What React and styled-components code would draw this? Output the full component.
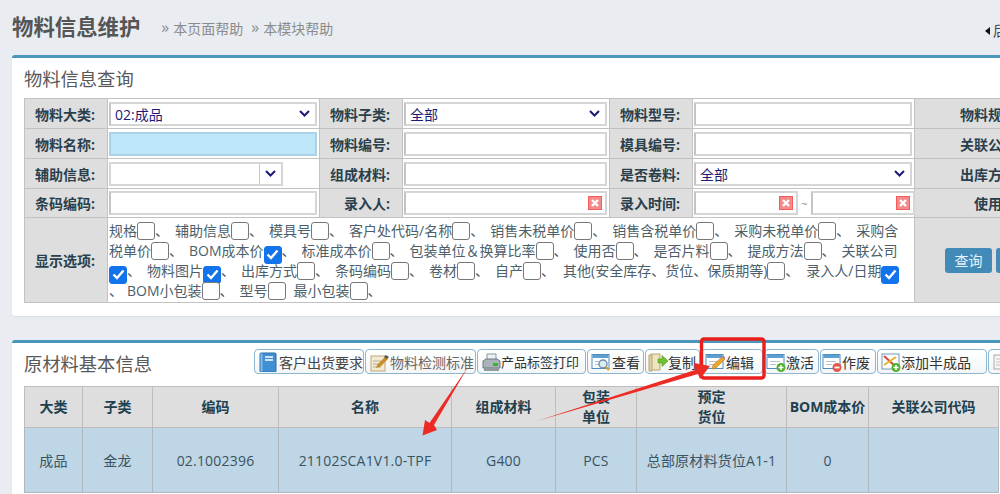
import React from 'react';
import styled, { createGlobalStyle } from 'styled-components';

const Global = createGlobalStyle`
  html, body { margin: 0; padding: 0; background: #e9edf2; overflow: hidden; }
  body { font-family: "Open Sans", "Noto Sans CJK SC", "Liberation Sans", sans-serif; font-size: 14px; }
`;
const Stage = styled.div`position: relative; width: 1000px; height: 494px; overflow: hidden; background: #e9edf2;`;
const PageHead = styled.header`height: 55px; width: 1040px; padding-left: 12px; display: flex; align-items: center; box-sizing: border-box;`;
const PageTitle = styled.h1`margin: 0 21px 0 0; font-size: 21.4px; line-height: 30px; font-weight: 700; color: #555; position: relative; top: -1px; white-space: nowrap;`;
const HelpLink = styled.a`margin-right: 8px; color: #8b8b8b; font-size: 14px; display: inline-flex; align-items: center; white-space: nowrap;`;
const Chev = styled.span`width: 12px; font-size: 16px; line-height: 18px; position: relative; top: -1px;`;
const Back = styled.span`position: absolute; left: 985px; top: 22px; font-size: 14px; line-height: 18px; color: #444; white-space: nowrap; display: flex; align-items: center; gap: 3px;`;
const Tri = styled.i`display: inline-block; width: 0; height: 0; border: 4px solid transparent; border-right: 5px solid #111; border-left: 0;`;
const Panel = styled.section`margin: ${p => p.$top}px 0 0 12px; width: 1240px; background: #fff; border-top: 3px solid #4a95ba; border-radius: 3px; box-shadow: 0 1px 2px #d8dce2; box-sizing: border-box; padding: 0 12px ${p => p.$bottom}px;`;
const PanelTitle = styled.h2`margin: 0; font-size: 18.3px; font-weight: 400; color: #585858; line-height: 26px; white-space: nowrap;`;
const QueryHead = styled.div`height: 40px; display: flex; align-items: center; padding-top: 2px; box-sizing: border-box;`;
const Table = styled.table`border-collapse: collapse; table-layout: fixed; width: ${p => p.$w}px; border: 1px solid #bbb;`;
const Row = styled.tr`height: ${p => p.$h}px;`;
const Label = styled.td`background: #dedede; border: 1px solid #c2c2c2; padding: 0 12px 0 0; text-align: right; font-weight: 700; color: #2a3f4c; font-size: 14px; white-space: nowrap;`;
const Value = styled.td`border: 1px solid #c2c2c2; padding: 0 2px 0 1px; background: #fff;`;
const Field = styled.div`height: 24px; box-sizing: border-box; border: 2px solid ${p => p.$blue ? '#a9d4e8' : '#d6d6d6'}; border-left-color: ${p => p.$blue ? '#a9d4e8' : '#c4c4c4'}; background: ${p => p.$blue ? '#bde6f9' : '#fff'}; width: ${p => p.$w ? p.$w + 'px' : '100%'}; display: flex; align-items: center; padding-left: 4px; color: #1d1a75; font-size: 14px; justify-content: ${p => p.$end ? 'flex-end' : 'space-between'}; flex: none;`;
const Combo = styled.div`width: 174px; height: 24px; box-sizing: border-box; border: 2px solid #d6d6d6; display: flex; justify-content: flex-end; background: #fff;`;
const ComboBtn = styled.div`width: 21px; border-left: 1px solid #c9c9c9; display: flex; align-items: center; justify-content: center;`;
const DateRange = styled.div`display: flex; align-items: center;`;
const Tilde = styled.span`width: 13px; flex: none; text-align: center; font-size: 11px; color: #888;`;
const ClearBox = styled.svg`width: 14px; height: 14px; margin-right: 3px; flex: none;`;
const ChevWrap = styled.span`display: flex; padding-right: 5px;`;
const Options = styled.td`border: 1px solid #c2c2c2; padding: 3px 0 0 1px; font-size: 14px; color: #4d5f6b; vertical-align: top; overflow: hidden;`;
const OptLine = styled.div`height: 20px; line-height: 20px; white-space: nowrap;`;
const Box = styled.span`display: inline-flex; width: 18px; height: 18px; box-sizing: border-box; border: 1px solid #777; border-radius: 3px; vertical-align: -4px; align-items: center; justify-content: center; background: ${p => p.$on ? '#1273eb' : '#fff'}; border-color: ${p => p.$on ? '#1273eb' : '#777'};`;
const Sep = styled.span`margin-right: ${p => p.$gap ?? 6}px;`;
const ActionCell = styled.td`background: #dedede; border: 1px solid #c2c2c2; padding: 0 0 0 30px;`;
const ActionRow = styled.div`display: flex; gap: 4px;`;
const QueryBtn = styled.div`width: 47px; height: 25px; border-radius: 3px; background: #428bb9; color: #e8f2f8; font-size: 14px; display: flex; align-items: center; justify-content: center; flex: none;`;
const InfoHead = styled.div`height: 43px; display: flex; align-items: flex-start;`;
const InfoTitle = styled(PanelTitle)`width: 230px; flex: none; margin-top: 8px;`;
const Toolbar = styled.div`display: flex; gap: 1px; margin-top: 6px;`;
const ToolBtn = styled.div`width: ${p => p.$w}px; height: 25px; flex: none; box-sizing: border-box; border: 1px solid #8db6cf; border-radius: 4px; background: linear-gradient(#fff, #f3f5f7); display: flex; align-items: center; padding-left: ${p => p.$pad ?? 3}px; gap: ${p => p.$gap ?? 1}px; font-size: ${p => p.$fs ?? 14}px; color: ${p => p.$c || '#444'}; white-space: nowrap;`;
const Th = styled.th`background: #dedede; border: 1px solid #bdbdbd; font-size: 14px; line-height: 20px; font-weight: 700; color: #20404f; padding: 0;`;
const Td = styled.td`background: #bed6e5; border: 1px solid #adb8bf; text-align: center; font-size: 14px; letter-spacing: .2px; color: #3c5362; padding: 0; white-space: nowrap;`;
const Annotation = styled.svg`position: absolute; left: 0; top: 0; pointer-events: none;`;
const IconSvg = styled.svg`flex: none;`;

const Chevron = () => (
  <svg width="11" height="7" viewBox="0 0 11 7"><path d="M1 1l4.5 4.5L10 1" fill="none" stroke="#1d1a75" strokeWidth="2" /></svg>
);
const Select = ({ children }) => (
  <Field>{children}<ChevWrap><Chevron /></ChevWrap></Field>
);
const Clear = () => (
  <ClearBox viewBox="0 0 14 14">
    <rect width="14" height="14" fill="#f25c5c" />
    <rect x="1" y="1" width="12" height="12" fill="#f58a8a" />
    <path d="M4 4l6 6M10 4l-6 6" stroke="#fff" strokeWidth="2.4" />
  </ClearBox>
);
const ClearField = ({ w }) => (
  <Field $w={w} $end><Clear /></Field>
);
const Check = ({ on }) => (
  <Box $on={on}>{on && <svg width="13" height="11" viewBox="0 0 13 11"><path d="M1.5 5.5l3.5 3.5 6.5-7.5" fill="none" stroke="#fff" strokeWidth="2.4" /></svg>}</Box>
);
const Opt = ({ t, on, gap, noSep }) => (
  <>{t}<Check on={on} />{!noSep && <Sep $gap={gap}>、</Sep>}</>
);

const Win = ({ children }) => (
  <>
    <rect x="1" y="2.5" width="17" height="14" fill="#fff" stroke="#4f8fc0" />
    <rect x="1.5" y="3" width="16" height="3" fill="#5d9fd0" />
    <path d="M4 9.5h10M4 12.5h6" stroke="#b8c4cc" />
    {children}
  </>
);
const Ico = ({ children }) => <IconSvg width="20" height="20" viewBox="0 0 20 20">{children}</IconSvg>;
const icons = {
  book: <Ico><rect x="2" y="1" width="16" height="19" rx="1" fill="#3f8fd2" stroke="#2a6ea8" /><rect x="2.5" y="1.5" width="2" height="18" fill="#7fbce8" /><path d="M7 5h8M7 8h8" stroke="#fff" strokeWidth="1.5" /></Ico>,
  note: <Ico><rect x="2" y="4" width="14" height="15" fill="#f3ead2" stroke="#bda877" /><path d="M4 9h8M4 12h6M4 15h8" stroke="#b8b09a" /><path d="M8 13l8-8 3 2-8 8-4 1z" fill="#c88d28" /><path d="M15 5l2-2 3 2-2 2z" fill="#555" /></Ico>,
  print: <Ico><path d="M6 2h9v6H6z" fill="#eef1f3" stroke="#8a959c" /><path d="M2 9l3-2h11l3 2v7H2z" fill="#a9b3ba" stroke="#6d7880" /><path d="M3 16h15v3H3z" fill="#8f9aa1" /><rect x="12" y="11" width="5" height="3" fill="#35b534" /></Ico>,
  view: <Ico><Win /><circle cx="12" cy="12" r="4" fill="#dceaf4" stroke="#6d8fa8" strokeWidth="1.4" /><path d="M15 15l3 3" stroke="#d89a2a" strokeWidth="2.2" /></Ico>,
  copy: <Ico><path d="M3 2h9v16H3z" fill="#efe4c0" stroke="#b5a573" /><path d="M1 3h3v16H1z" fill="#dccfa2" stroke="#b5a573" /><path d="M10 7h4V3.5L20 9l-6 5.5V11h-4z" fill="#6fc22f" stroke="#4b9a1b" strokeWidth=".6" /></Ico>,
  edit: <Ico><Win /><path d="M7 17l1-4 9-8 3 2-9 9z" fill="#eda62d" stroke="#b97a18" strokeWidth=".6" /><path d="M17 5l1.5-1.5 2 2L19 7z" fill="#c47ab8" /></Ico>,
  on: <Ico><Win /><circle cx="15" cy="15.5" r="4.5" fill="#55b030" /><path d="M15 13v5M12.5 15.5h5" stroke="#fff" strokeWidth="1.6" /></Ico>,
  off: <Ico><Win /><circle cx="15" cy="15.5" r="4.5" fill="#e2574c" /><path d="M12.5 15.5h5" stroke="#fff" strokeWidth="1.8" /></Ico>,
  add: <Ico><rect x="1" y="2" width="17" height="15" fill="#fff" stroke="#6d9bbd" /><path d="M3 4l11 10" stroke="#d14a3c" strokeWidth="2" /><path d="M3 13L15 5" stroke="#e2b32c" strokeWidth="2" /><circle cx="15" cy="15.5" r="4.5" fill="#55b030" /><path d="M15 13v5M12.5 15.5h5" stroke="#fff" strokeWidth="1.6" /></Ico>,
  doc: <Ico><rect x="2" y="3" width="16" height="14" fill="#f6f6f6" stroke="#a9a9a9" /><path d="M4 7h12M4 10h12M4 13h8" stroke="#c4c4c4" /></Ico>,
};
const tools = [
  { t: '客户出货要求', i: 'book', w: 110, gap: 1 },
  { t: '物料检测标准', i: 'note', w: 111, gap: 1, c: '#666' },
  { t: '产品标签打印', i: 'print', w: 109, gap: 0, c: '#333', fs: 13 },
  { t: '查看', i: 'view', w: 57, gap: 1, c: '#333' },
  { t: '复制', i: 'copy', w: 55, gap: 0, pad: 2, c: '#333' },
  { t: '编辑', i: 'edit', w: 62, gap: 1, c: '#333' },
  { t: '激活', i: 'on', w: 55, gap: 0, pad: 1, c: '#333' },
  { t: '作废', i: 'off', w: 56, gap: 0, pad: 1, c: '#333' },
  { t: '添加半成品', i: 'add', w: 110, gap: 0, c: '#333' },
  { t: '撤销', i: 'doc', w: 60, gap: 1, c: '#333' },
];
const queryCols = [83, 212, 83, 207, 83, 222, 118, 200];
const infoCols = [58, 70, 126, 173, 104, 81, 150, 82, 130];

export default function App() {
  return (
    <Stage>
      <Global />
      <PageHead>
        <PageTitle>物料信息维护</PageTitle>
        <HelpLink><Chev>»</Chev>本页面帮助</HelpLink>
        <HelpLink><Chev>»</Chev>本模块帮助</HelpLink>
      </PageHead>
      <Back><Tri />后退</Back>
      <Panel $top={0} $bottom={13}>
        <QueryHead><PanelTitle>物料信息查询</PanelTitle></QueryHead>
        <Table $w={1208}>
          <colgroup>{queryCols.map((w, i) => <col key={i} width={w} />)}</colgroup>
          <tbody>
            <Row $h={30}>
              <Label>物料大类:</Label><Value><Select>02:成品</Select></Value>
              <Label>物料子类:</Label><Value><Select>全部</Select></Value>
              <Label>物料型号:</Label><Value><Field /></Value>
              <Label>物料规格:</Label><Value><Field /></Value>
            </Row>
            <Row $h={30}>
              <Label>物料名称:</Label><Value><Field $blue /></Value>
              <Label>物料编号:</Label><Value><Field /></Value>
              <Label>模具编号:</Label><Value><Field /></Value>
              <Label>关联公司:</Label><Value><Field /></Value>
            </Row>
            <Row $h={30}>
              <Label>辅助信息:</Label><Value><Combo><ComboBtn><Chevron /></ComboBtn></Combo></Value>
              <Label>组成材料:</Label><Value><Field /></Value>
              <Label>是否卷料:</Label><Value><Select>全部</Select></Value>
              <Label>出库方式:</Label><Value><Field /></Value>
            </Row>
            <Row $h={29}>
              <Label>条码编码:</Label><Value><Field /></Value>
              <Label>录入人:</Label><Value><ClearField /></Value>
              <Label>录入时间:</Label>
              <Value><DateRange><ClearField w={104} /><Tilde>~</Tilde><ClearField w={104} /></DateRange></Value>
              <Label>使用否:</Label><Value><Field /></Value>
            </Row>
            <Row $h={85}>
              <Label>显示选项:</Label>
              <Options colSpan={5}>
                <OptLine><Opt t="规格" /><Opt t="辅助信息" /><Opt t="模具号" /><Opt t="客户处代码/名称" /><Opt t="销售未税单价" /><Opt t="销售含税单价" /><Opt t="采购未税单价" />采购含</OptLine>
                <OptLine>税单价<Check /><Sep>、</Sep><Opt t="BOM成本价" on /><Opt t="标准成本价" /><Opt t="包装单位＆换算比率" /><Opt t="使用否" /><Opt t="是否片料" /><Opt t="提成方法" />关联公司</OptLine>
                <OptLine><Check on /><Sep>、</Sep><Opt t="物料图片" on /><Opt t="出库方式" /><Opt t="条码编码" /><Opt t="卷材" /><Opt t="自产" gap={8} /><Opt t="其他(安全库存、货位、保质期等)" gap={7} /><Opt t="录入人/日期" on noSep /></OptLine>
                <OptLine><Sep $gap={4}>、</Sep><Opt t="BOM小包装" /><Opt t="型号" noSep /><Sep $gap={8} /><Opt t="最小包装" /></OptLine>
              </Options>
              <ActionCell colSpan={2}>
                <ActionRow><QueryBtn>查询</QueryBtn><QueryBtn>重置</QueryBtn></ActionRow>
              </ActionCell>
            </Row>
          </tbody>
        </Table>
      </Panel>
      <Panel $top={24} $bottom={13}>
        <InfoHead>
          <InfoTitle>原材料基本信息</InfoTitle>
          <Toolbar>
            {tools.map(b => (
              <ToolBtn key={b.t} $w={b.w} $gap={b.gap} $c={b.c} $pad={b.pad} $fs={b.fs}>{icons[b.i]}{b.t}</ToolBtn>
            ))}
          </Toolbar>
        </InfoHead>
        <Table $w={974}>
          <colgroup>{infoCols.map((w, i) => <col key={i} width={w} />)}</colgroup>
          <thead>
            <Row $h={41}>
              <Th>大类</Th><Th>子类</Th><Th>编码</Th><Th>名称</Th><Th>组成材料</Th>
              <Th>包装<br />单位</Th><Th>预定<br />货位</Th><Th>BOM成本价</Th><Th>关联公司代码</Th>
            </Row>
          </thead>
          <tbody>
            <Row $h={65}>
              <Td>成品</Td><Td>金龙</Td><Td>02.1002396</Td><Td>21102SCA1V1.0-TPF</Td><Td>G400</Td>
              <Td>PCS</Td><Td>总部原材料货位A1-1</Td><Td>0</Td><Td />
            </Row>
          </tbody>
        </Table>
      </Panel>
      <Annotation width="1000" height="494" viewBox="0 0 1000 494">
        <rect x="701.5" y="339" width="62.5" height="39" rx="2.5" fill="none" stroke="#e81f1c" strokeWidth="3.4" />
        <polygon points="468,367 434,425 437,430 422.5,435.5 425,420 429.5,423" fill="#ee2a24" />
        <polygon points="537,421 695,370 694,363 710,366 700,379 698,374" fill="#ee2a24" />
      </Annotation>
    </Stage>
  );
}
